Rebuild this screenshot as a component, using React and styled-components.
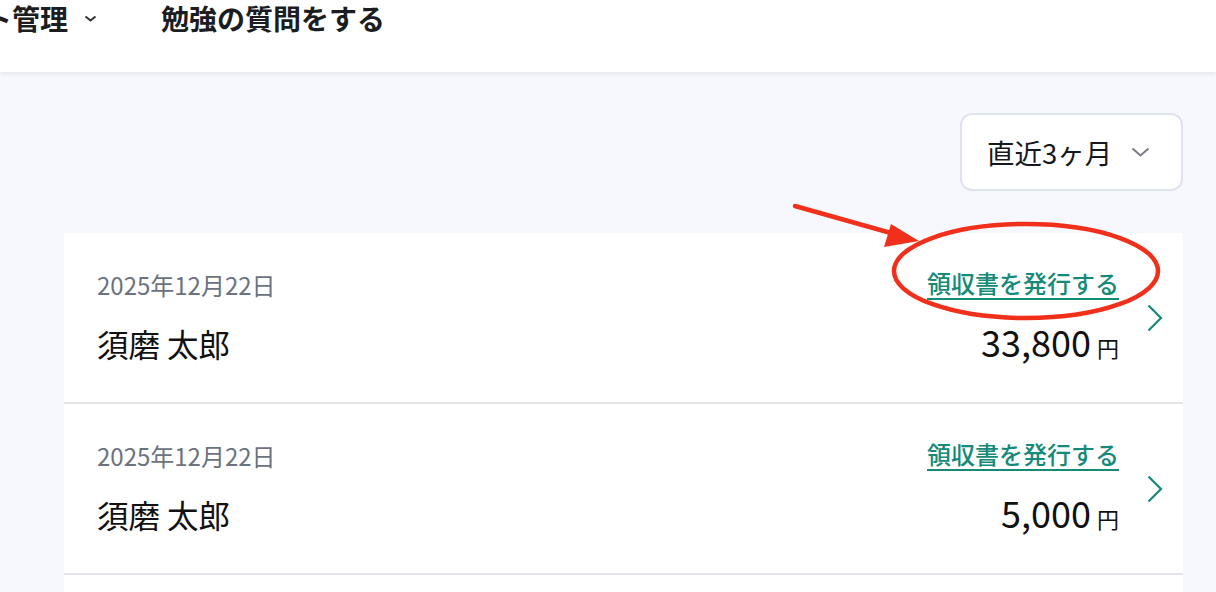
import React from 'react';
import styled, { createGlobalStyle } from 'styled-components';

const GlobalStyle = createGlobalStyle`
  html, body {
    margin: 0;
    padding: 0;
    background: #f7f8fd;
    font-family: "Noto Sans CJK JP", "Noto Sans", sans-serif;
    color: #111;
  }
`;

const Page = styled.div`
  position: relative;
  width: 1216px;
  height: 592px;
  overflow: hidden;
  background: #f7f8fd;
`;

const Header = styled.header`
  height: 72px;
  background: #fff;
  box-shadow: 0 2px 4px rgba(20, 30, 60, 0.08);
  display: flex;
  align-items: flex-start;
  overflow: hidden;
`;

const Nav = styled.nav`
  display: flex;
  align-items: center;
  gap: 64px;
  margin-left: -16px;
  height: 36px;
`;

const NavItem = styled.div`
  display: flex;
  align-items: center;
  gap: 16px;
  font-size: 28px;
  font-weight: 700;
  letter-spacing: 0;
  color: #1b1d22;
  white-space: nowrap;
`;

const Main = styled.main`
  padding: 41px 33px 0 64px;
`;

const Toolbar = styled.div`
  display: flex;
  justify-content: flex-end;
  margin-bottom: 42px;
`;

const Select = styled.button`
  width: 223px;
  height: 78px;
  box-sizing: border-box;
  background: #fff;
  border: 2px solid #dfe4ec;
  border-radius: 12px;
  display: flex;
  align-items: center;
  justify-content: space-between;
  padding: 0 31px 0 25px;
  font-family: inherit;
  font-size: 27.5px;
  color: #161820;
`;

const List = styled.ul`
  list-style: none;
  margin: 0;
  padding: 0;
  background: #fff;
`;

const Row = styled.li`
  height: 171px;
  box-sizing: border-box;
  border-bottom: 2px solid #e4e5eb;
  display: flex;
  align-items: center;
  padding: 0 20px 0 33px;
`;

const Info = styled.div`
  flex: 1;
  display: flex;
  flex-direction: column;
  gap: 20px;
  margin-top: -2px;
`;

const DateText = styled.div`
  font-size: 24px;
  line-height: 32px;
  color: #6b7280;
`;

const Name = styled.div`
  font-size: 31.5px;
  line-height: 44px;
  color: #111;
`;

const Right = styled.div`
  display: flex;
  flex-direction: column;
  align-items: flex-end;
  gap: 20px;
  margin-right: 28px;
`;

const Link = styled.a`
  font-size: 24px;
  line-height: 32px;
  font-weight: 500;
  color: #168a78;
  text-decoration: underline;
  text-underline-offset: 5px;
  text-decoration-thickness: 2px;
`;

const Amount = styled.div`
  display: flex;
  align-items: baseline;
  gap: 6px;
  font-size: 36px;
  line-height: 44px;
  color: #111;
  span {
    font-size: 22px;
  }
`;

const Overlay = styled.svg`
  position: absolute;
  left: 0;
  top: 0;
  pointer-events: none;
`;

const Chevron = ({ color = '#168a78', w = 16, h = 28, dir = 'right' }) => (
  <svg width={w} height={h} viewBox={`0 0 ${w} ${h}`} fill="none">
    {dir === 'right' ? (
      <path d={`M1.5 1.5 L${w - 2} ${h / 2} L1.5 ${h - 1.5}`} stroke={color} strokeWidth="2.2" />
    ) : (
      <path d={`M1.5 1.5 L${w / 2} ${h - 1.5} L${w - 1.5} 1.5`} stroke={color} strokeWidth="2" />
    )}
  </svg>
);

const rows = [
  { date: '2025年12月22日', name: '須磨 太郎', amount: '33,800' },
  { date: '2025年12月22日', name: '須磨 太郎', amount: '5,000' },
  { date: '2025年12月22日', name: '須磨 太郎', amount: '5,000' },
];

export default function App() {
  return (
    <Page>
      <GlobalStyle />
      <Header>
        <Nav>
          <NavItem>
            ト管理
            <Chevron dir="down" w={13} h={7} color="#333" />
          </NavItem>
          <NavItem>勉強の質問をする</NavItem>
        </Nav>
      </Header>
      <Main>
        <Toolbar>
          <Select>
            直近3ヶ月
            <Chevron dir="down" w={19} h={10} color="#777b84" />
          </Select>
        </Toolbar>
        <List>
          {rows.map((r, i) => (
            <Row key={i}>
              <Info>
                <DateText>{r.date}</DateText>
                <Name>{r.name}</Name>
              </Info>
              <Right>
                <Link>領収書を発行する</Link>
                <Amount>
                  {r.amount}
                  <span>円</span>
                </Amount>
              </Right>
              <Chevron />
            </Row>
          ))}
        </List>
      </Main>
      <Overlay width="1216" height="592" viewBox="0 0 1216 592">
        <line x1="795" y1="206" x2="898" y2="235" stroke="#f1301c" strokeWidth="4.5" strokeLinecap="round" />
        <polygon points="919,241 891,224 884,247" fill="#f1301c" />
        <ellipse cx="1026" cy="271" rx="132" ry="47" fill="none" stroke="#f1301c" strokeWidth="4.5" />
      </Overlay>
    </Page>
  );
}
